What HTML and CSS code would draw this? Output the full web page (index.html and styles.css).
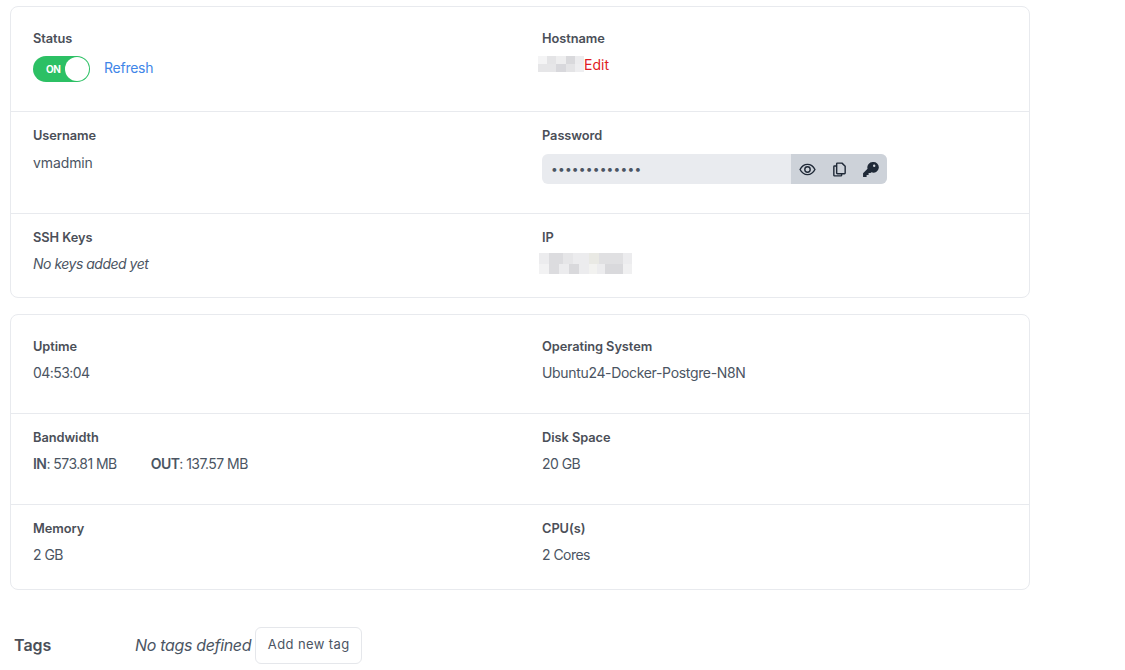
FILE: index.html
```html
<!DOCTYPE html>
<html lang="en">
<head>
<meta charset="utf-8">
<title>Server details</title>
<link rel="stylesheet" href="styles.css">
</head>
<body>
<main class="page">
  <section class="card">
    <div class="row row-a">
      <div class="cell">
        <div class="label">Status</div>
        <div class="status-line">
          <span class="toggle"><span class="toggle-text">ON</span><span class="knob"></span></span>
          <a class="link">Refresh</a>
        </div>
      </div>
      <div class="cell">
        <div class="label">Hostname</div>
        <div class="host-line">
          <svg class="blur" width="46" height="16" viewBox="0 0 46 16" aria-hidden="true">
            <rect width="46" height="16" fill="#eeeef0"/>
            <rect x="0" y="0" width="9" height="8" fill="#f4f4f5"/><rect x="9" y="0" width="9" height="8" fill="#e4e4e6"/><rect x="18" y="0" width="10" height="8" fill="#eeeeef"/><rect x="28" y="0" width="9" height="8" fill="#d9d9dc"/><rect x="37" y="0" width="9" height="8" fill="#ececee"/>
            <rect x="0" y="8" width="18" height="8" fill="#e6e6e8"/><rect x="18" y="8" width="10" height="8" fill="#d8d8dc"/><rect x="28" y="8" width="9" height="8" fill="#e4e4e6"/><rect x="37" y="8" width="9" height="8" fill="#eeeef0"/>
          </svg><a class="link-danger">Edit</a>
        </div>
      </div>
    </div>
    <div class="row row-b">
      <div class="cell">
        <div class="label">Username</div>
        <div class="value">vmadmin</div>
      </div>
      <div class="cell">
        <div class="label">Password</div>
        <div class="password">
          <span class="password-dots">•••••••••••••</span>
          <span class="password-actions">
            <svg class="icon" viewBox="0 0 24 24" fill="none" stroke="currentColor" stroke-width="2" aria-hidden="true"><path d="M1.500 12c2.500-4.800 6.200-7.200 10.500-7.200s8 2.400 10.500 7.200c-2.500 4.800-6.200 7.200-10.500 7.200S4 16.800 1.500 12z"/><circle cx="12" cy="12" r="3.800"/></svg>
            <svg class="icon" viewBox="0 0 24 24" fill="none" stroke="currentColor" stroke-width="2" stroke-linejoin="round" aria-hidden="true"><path d="M9 3h6.500L20 7.500V17a1 1 0 0 1-1 1H9a1 1 0 0 1-1-1V4a1 1 0 0 1 1-1z"/><path d="M8 7H5a1 1 0 0 0-1 1v12a1 1 0 0 0 1 1h9a1 1 0 0 0 1-1v-2"/></svg>
            <svg class="icon" viewBox="0 0 24 24" fill="currentColor" aria-hidden="true"><path d="M15 1.500a7.500 7.500 0 0 0-7.200 9.500L1.500 17.300V22.500h5v-2.800h2.800v-2.800h2.700l1.300-1.100A7.500 7.500 0 1 0 15 1.500zm2.200 3.600a1.700 1.700 0 1 1 0 3.400 1.700 1.700 0 0 1 0-3.400z"/></svg>
          </span>
        </div>
      </div>
    </div>
    <div class="row row-c">
      <div class="cell">
        <div class="label">SSH Keys</div>
        <div class="value value-italic">No keys added yet</div>
      </div>
      <div class="cell">
        <div class="label">IP</div>
        <svg class="blur blur-ip" width="93" height="21" viewBox="0 0 93 21" aria-hidden="true">
          <rect width="93" height="21" fill="#ececee"/>
          <rect x="10" y="0" width="14" height="11" fill="#dcdcdf"/><rect x="24" y="0" width="10" height="11" fill="#e6e6e8"/><rect x="50" y="0" width="10" height="11" fill="#e9e9e4"/><rect x="60" y="0" width="24" height="11" fill="#e0e0e2"/>
          <rect x="0" y="11" width="10" height="10" fill="#f2f2f3"/><rect x="10" y="11" width="10" height="10" fill="#dcdcdf"/><rect x="30" y="11" width="10" height="10" fill="#d9d9dc"/><rect x="50" y="11" width="8" height="10" fill="#f2f2f0"/><rect x="66" y="11" width="18" height="10" fill="#d9d9dc"/><rect x="84" y="11" width="9" height="10" fill="#f0f0f1"/>
        </svg>
      </div>
    </div>
  </section>

  <section class="card">
    <div class="row row-d">
      <div class="cell">
        <div class="label">Uptime</div>
        <div class="value value-num">04:53:04</div>
      </div>
      <div class="cell">
        <div class="label">Operating System</div>
        <div class="value value-long">Ubuntu24-Docker-Postgre-N8N</div>
      </div>
    </div>
    <div class="row row-e">
      <div class="cell">
        <div class="label">Bandwidth</div>
        <div class="value value-num bandwidth">
          <span><b>IN</b>: 573.81 MB</span>
          <span><b>OUT</b>: 137.57 MB</span>
        </div>
      </div>
      <div class="cell">
        <div class="label">Disk Space</div>
        <div class="value value-num">20 GB</div>
      </div>
    </div>
    <div class="row row-e">
      <div class="cell">
        <div class="label">Memory</div>
        <div class="value value-num">2 GB</div>
      </div>
      <div class="cell">
        <div class="label">CPU(s)</div>
        <div class="value value-num">2 Cores</div>
      </div>
    </div>
  </section>

  <section class="tags">
    <h2 class="tags-title">Tags</h2>
    <span class="tags-empty">No tags defined</span>
    <button class="tag-button" type="button">Add new tag</button>
  </section>
</main>
</body>
</html>
```
FILE: styles.css
```css
* { box-sizing: border-box; }
html, body { margin: 0; background: #fff; overflow: hidden; }
body { font-family: "Inter", "Liberation Sans", sans-serif; color: #4b5563; height: 670px; }
.page { width: 1020px; margin-left: 10px; padding-top: 6px; }
.card { border: 1px solid #e8eaee; border-radius: 8px; margin-bottom: 16px; }
.row { display: grid; grid-template-columns: 509px 509px; padding-top: 16px; border-top: 1px solid #e8eaee; }
.row:first-child { border-top: 0; padding-top: 24px; }
.row-a { height: 104px; }
.row-b { height: 102px; }
.row-c { height: 84px; }
.row-d { height: 98px; }
.row-e { height: 91px; }
.row-e:last-child { height: 85px; }
.cell { padding-left: 22px; }
.label { font-size: 12.8px; line-height: 16px; font-weight: 600; color: #4b4f58; letter-spacing: -0.05px; }
.value { font-size: 14px; line-height: 20px; margin-top: 8px; color: #4b5563; letter-spacing: -0.1px; }
.row-b .value { margin-top: 9px; }
.value-long { letter-spacing: -0.33px; }
.value-num { letter-spacing: -0.55px; }
.value-italic { font-style: italic; letter-spacing: -0.5px; }
.status-line { display: flex; align-items: center; gap: 14px; margin-top: 9px; }
.toggle { width: 57px; height: 26px; border-radius: 13px; background: #2cc064; display: flex; align-items: center; justify-content: space-between; padding: 0 1px 0 13px; }
.toggle-text { font-size: 10px; font-weight: 700; color: #fff; letter-spacing: -0.5px; }
.knob { width: 24px; height: 24px; border-radius: 50%; background: #fff; }
.link { font-size: 14px; color: #3f86e8; letter-spacing: -0.25px; margin-bottom: 4px; }
.link-danger { font-size: 14px; color: #e01b24; }
.host-line { display: flex; align-items: center; height: 20px; margin-top: 7px; }
.blur { display: block; flex: none; margin-left: -4px; }
.blur-ip { margin-left: -3px; margin-top: 7px; }
.password { width: 345px; height: 30px; margin-top: 10px; background: #e9ebef; border-radius: 6px; display: flex; justify-content: space-between; overflow: hidden; }
.password-dots { font-size: 12px; line-height: 29px; padding-left: 9px; letter-spacing: 0.2px; color: #4b5563; }
.password-actions { width: 96px; background: #cdd2d9; color: #1f2937; display: flex; align-items: center; justify-content: space-between; padding: 0 8px; }
.icon { width: 17px; height: 17px; display: block; }
.bandwidth { display: flex; gap: 34px; }
.bandwidth b { font-weight: 600; }
.tags { display: flex; align-items: center; padding-left: 4px; margin-top: 37px; }
.tags-title { width: 121px; margin: 0 0 2px; font-size: 16px; font-weight: 600; color: #4b4f58; }
.tags-empty { font-size: 16px; font-style: italic; color: #4b5563; margin-right: 4px; margin-bottom: 2px; letter-spacing: -0.33px; }
.tag-button { width: 107px; height: 37px; background: #fff; border: 1px solid #e5e7eb; border-radius: 6px; font: 400 13px "Inter", sans-serif; color: #4b5563; letter-spacing: 0.4px; padding: 0 0 3px; }
```
